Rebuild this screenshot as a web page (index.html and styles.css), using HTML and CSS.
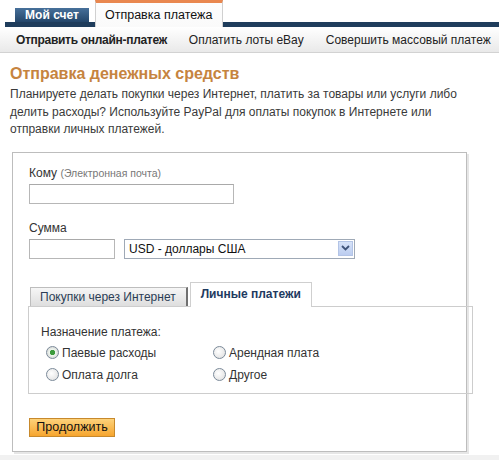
FILE: index.html
```html
<!DOCTYPE html>
<html lang="ru">
<head>
<meta charset="utf-8">
<title>Отправка платежа</title>
<link rel="stylesheet" href="styles.css">
</head>
<body>
<header class="header">
  <div class="tabs">
    <a class="tab tab-dark">Мой счет</a>
    <a class="tab tab-active">Отправка платежа</a>
  </div>
  <nav class="subnav">
    <a class="sub sub-current">Отправить онлайн-платеж</a>
    <a class="sub">Оплатить лоты eBay</a>
    <a class="sub">Совершить массовый платеж</a>
  </nav>
</header>
<main class="page">
  <h1 class="title">Отправка денежных средств</h1>
  <p class="intro">Планируете делать покупки через Интернет, платить за товары или услуги либо делить расходы? Используйте PayPal для оплаты покупок в Интернете или отправки личных платежей.</p>
  <form class="box">
    <div class="field">
      <label class="label">Кому <span class="hint">(Электронная почта)</span></label>
      <input class="input input-email" type="text">
    </div>
    <div class="field field-sum">
      <label class="label">Сумма</label>
      <div class="row">
        <input class="input input-amount" type="text">
        <div class="select-wrap">
          <select class="select"><option>USD - доллары США</option></select>
          <span class="select-btn"><svg width="9" height="6" viewBox="0 0 9 6"><path d="M1 1 L4.5 4.5 L8 1" fill="none" stroke="#3f5378" stroke-width="1.8"/></svg></span>
        </div>
      </div>
    </div>
    <div class="ptabs">
      <div class="ptab-row">
        <span class="ptab">Покупки через Интернет</span>
        <span class="ptab ptab-active">Личные платежи</span>
      </div>
      <div class="ppanel">
        <div class="plabel">Назначение платежа:</div>
        <div class="radios">
          <label class="radio"><input type="radio" name="p" checked>Паевые расходы</label>
          <label class="radio"><input type="radio" name="p">Арендная плата</label>
          <label class="radio"><input type="radio" name="p">Оплата долга</label>
          <label class="radio"><input type="radio" name="p">Другое</label>
        </div>
      </div>
    </div>
    <button class="btn" type="button">Продолжить</button>
  </form>
</main>
</body>
</html>
```
FILE: styles.css
```css
html, body {
  margin: 0;
  padding: 0;
}
body {
  font-family: "Liberation Sans", Arial, sans-serif;
  font-size: 12px;
  color: #333;
  background: #f1f1f1;
}
.header {
  background: #fff;
}
.tabs {
  display: flex;
  align-items: flex-end;
  height: 22px;
  margin-left: 5px;
  padding-left: 10px;
  border-bottom: 5px solid #1f3d5c;
}
.tab {
  display: block;
  box-sizing: border-box;
}
.tab-dark {
  width: 74px;
  height: 14px;
  line-height: 15px;
  text-align: center;
  color: #fff;
  font-weight: bold;
  background: linear-gradient(#47709a, #24466a);
  margin-right: 6px;
}
.tab-active {
  position: relative;
  width: 128px;
  height: 27px;
  margin-bottom: -5px;
  border-top: 3px solid #e9874f;
  border-left: 1px solid #d0d0d0;
  border-right: 1px solid #d0d0d0;
  background: linear-gradient(#fdfdfd, #fafafa);
  padding: 1px 0 0 9px;
  line-height: 23px;
  color: #111;
  font-size: 12.5px;
}
.subnav {
  display: flex;
  align-items: center;
  height: 25px;
  padding-left: 16px;
  gap: 22px;
  background: linear-gradient(#ffffff, #e9e9e9);
  border-bottom: 1px solid #d2d2d2;
}
.sub {
  color: #222;
}
.sub-current {
  font-weight: bold;
  letter-spacing: -0.3px;
}
.page {
  background: #fff;
  padding: 12px 0 3px 10px;
}
.title {
  margin: 0;
  font-size: 16px;
  line-height: 18px;
  font-weight: bold;
  color: #c6843f;
}
.intro {
  margin: 3px 0 13px;
  line-height: 17.5px;
  color: #3a3a3a;
  width: 474px;
}
.box {
  box-sizing: border-box;
  width: 455px;
  margin-left: 2px;
  border: 1px solid #bdbdbd;
  box-shadow: 2px 2px 0 #e6e6e6;
  padding: 13px 0 14px 16px;
  background: #fff;
}
.field {
  display: flex;
  flex-direction: column;
  align-items: flex-start;
}
.field-sum {
  margin-top: 17px;
}
.label {
  line-height: 14px;
  color: #333;
  margin-bottom: 4px;
}
.hint {
  font-size: 10.5px;
  color: #777;
}
.input {
  box-sizing: border-box;
  height: 20px;
  margin: 0;
  border: 1px solid #b7b7b7;
  border-top-color: #a9a9a9;
  background: #fff;
  font: inherit;
}
.input-email {
  width: 205px;
}
.row {
  display: flex;
  gap: 9px;
}
.input-amount {
  width: 86px;
}
.select-wrap {
  position: relative;
  width: 231px;
  height: 20px;
}
.select {
  appearance: none;
  -webkit-appearance: none;
  box-sizing: border-box;
  width: 100%;
  height: 20px;
  margin: 0;
  padding: 0 0 0 4px;
  border: 1px solid #9fa9b6;
  border-radius: 0;
  background: #fff;
  font: inherit;
  color: #111;
}
.select-btn {
  position: absolute;
  right: 2px;
  top: 2px;
  box-sizing: border-box;
  width: 15px;
  height: 15px;
  display: flex;
  align-items: center;
  justify-content: center;
  background: linear-gradient(#d6e2f8, #bccdf0);
  border: 1px solid #b3c4e6;
}
.ptabs {
  margin-top: 23px;
}
.ptab-row {
  display: flex;
  align-items: flex-end;
  gap: 2px;
  margin-left: 1px;
}
.ptab {
  box-sizing: border-box;
  display: block;
}
.ptab:first-child {
  height: 19px;
  padding: 0 10px 0 9px;
  line-height: 19px;
  color: #2b3d55;
  background: linear-gradient(#f6f6f6, #dedede);
  border: 1px solid #bdbdbd;
  border-right: 2px solid #707070;
  border-bottom: none;
}
.ptab-active {
  position: relative;
  height: 25px;
  margin-bottom: -1px;
  padding: 0 10px;
  line-height: 22px;
  font-weight: bold;
  color: #1e3a5f;
  background: #fff;
  border: 1px solid #cfcfcf;
  border-bottom: none;
}
.ppanel {
  box-sizing: border-box;
  width: 445px;
  margin-left: -1px;
  border: 1px solid #cdcdcd;
  padding: 18px 0 7px 12px;
}
.plabel {
  line-height: 14px;
  color: #333;
  margin-bottom: 3px;
}
.radios {
  display: grid;
  grid-template-columns: 167px 167px;
  margin-left: 5px;
}
.radio {
  display: flex;
  align-items: center;
  height: 22px;
  color: #333;
}
.radio input {
  appearance: none;
  -webkit-appearance: none;
  box-sizing: border-box;
  width: 13px;
  height: 13px;
  margin: 0 3px 0 0;
  border: 1px solid #7b8a99;
  border-radius: 50%;
  background: radial-gradient(circle at 40% 40%, #ffffff, #dcdcdc);
}
.radio input:checked {
  background: radial-gradient(circle, #3d9b3d 0 2.3px, #eef6ee 3px, #d8d8d8 6px);
}
.btn {
  display: block;
  box-sizing: border-box;
  width: 86px;
  height: 19px;
  margin-top: 24px;
  padding: 0;
  border: 1px solid #c7892c;
  border-radius: 0;
  background: linear-gradient(#fdd27a, #f6a52f);
  font: inherit;
  font-size: 12.5px;
  color: #111;
  line-height: 17px;
}
```
